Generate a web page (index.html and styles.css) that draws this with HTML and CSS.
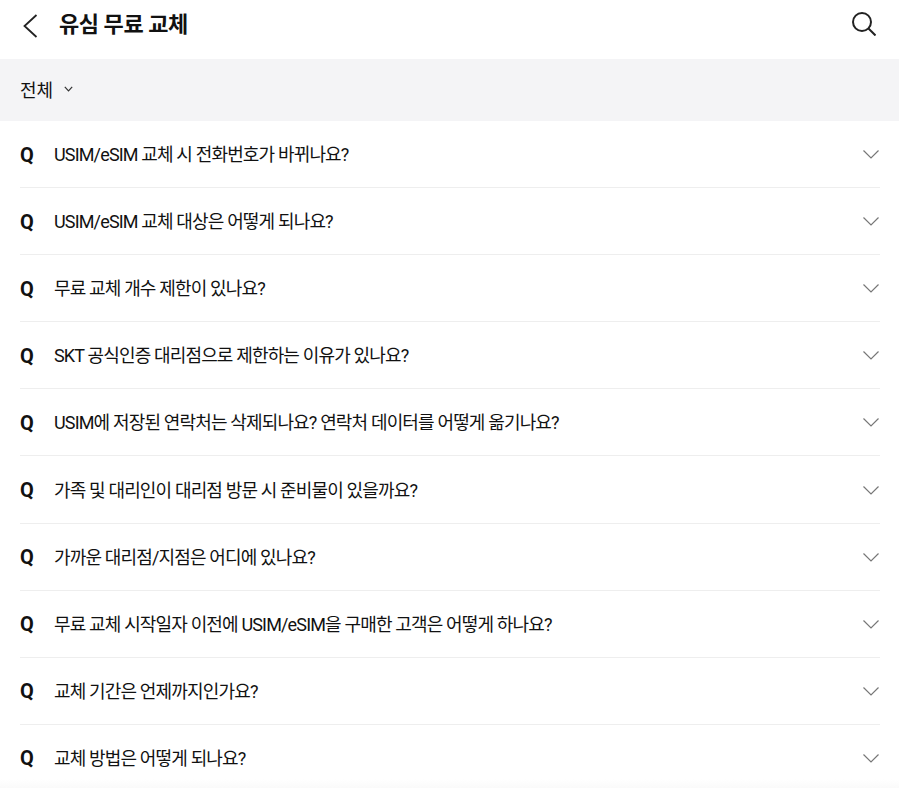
FILE: index.html
```html
<!DOCTYPE html>
<html lang="ko">
<head>
    <meta charset="UTF-8">
    <title>유심 무료 교체</title>
    <link rel="stylesheet" href="styles.css">
</head>
<body>
    <header class="top-bar">
        <div class="title-group">
            <button class="icon-button back-button" aria-label="back">
                <svg width="16" height="24" viewBox="0 0 16 24"><path d="M14.500 1 2.500 12 14.500 23" fill="none" stroke="#222" stroke-width="1.800"/></svg>
            </button>
            <h1>유심 무료 교체</h1>
        </div>
        <button class="icon-button search-button" aria-label="search">
            <svg width="24" height="24" viewBox="0 0 24 24"><circle cx="10" cy="10" r="9" fill="none" stroke="#222" stroke-width="2"/><path d="M16.500 16.500 23.500 23.500" fill="none" stroke="#222" stroke-width="2"/></svg>
        </button>
    </header>

    <div class="filter-bar">
        <span>전체</span>
        <svg width="9" height="6" viewBox="0 0 9 6"><path d="M.8.8 4.500 4.800 8.200.8" fill="none" stroke="#333" stroke-width="1.200"/></svg>
    </div>

    <ul class="faq-list">
        <li class="faq-item"><b>Q</b><span class="question">USIM/eSIM 교체 시 전화번호가 바뀌나요?</span><svg class="chevron" width="16" height="9" viewBox="0 0 16 9"><path d="M.5.500 8 8 15.500.5"/></svg></li>
        <li class="faq-item"><b>Q</b><span class="question">USIM/eSIM 교체 대상은 어떻게 되나요?</span><svg class="chevron" width="16" height="9" viewBox="0 0 16 9"><path d="M.5.500 8 8 15.500.5"/></svg></li>
        <li class="faq-item"><b>Q</b><span class="question">무료 교체 개수 제한이 있나요?</span><svg class="chevron" width="16" height="9" viewBox="0 0 16 9"><path d="M.5.500 8 8 15.500.5"/></svg></li>
        <li class="faq-item"><b>Q</b><span class="question">SKT 공식인증 대리점으로 제한하는 이유가 있나요?</span><svg class="chevron" width="16" height="9" viewBox="0 0 16 9"><path d="M.5.500 8 8 15.500.5"/></svg></li>
        <li class="faq-item"><b>Q</b><span class="question">USIM에 저장된 연락처는 삭제되나요? 연락처 데이터를 어떻게 옮기나요?</span><svg class="chevron" width="16" height="9" viewBox="0 0 16 9"><path d="M.5.500 8 8 15.500.5"/></svg></li>
        <li class="faq-item"><b>Q</b><span class="question">가족 및 대리인이 대리점 방문 시 준비물이 있을까요?</span><svg class="chevron" width="16" height="9" viewBox="0 0 16 9"><path d="M.5.500 8 8 15.500.5"/></svg></li>
        <li class="faq-item"><b>Q</b><span class="question">가까운 대리점/지점은 어디에 있나요?</span><svg class="chevron" width="16" height="9" viewBox="0 0 16 9"><path d="M.5.500 8 8 15.500.5"/></svg></li>
        <li class="faq-item"><b>Q</b><span class="question">무료 교체 시작일자 이전에 USIM/eSIM을 구매한 고객은 어떻게 하나요?</span><svg class="chevron" width="16" height="9" viewBox="0 0 16 9"><path d="M.5.500 8 8 15.500.5"/></svg></li>
        <li class="faq-item"><b>Q</b><span class="question">교체 기간은 언제까지인가요?</span><svg class="chevron" width="16" height="9" viewBox="0 0 16 9"><path d="M.5.500 8 8 15.500.5"/></svg></li>
        <li class="faq-item"><b>Q</b><span class="question">교체 방법은 어떻게 되나요?</span><svg class="chevron" width="16" height="9" viewBox="0 0 16 9"><path d="M.5.500 8 8 15.500.5"/></svg></li>
    </ul>

    <div class="bottom-fade"></div>
</body>
</html>
```

FILE: styles.css
```css
html, body {
    height: 100%;
}

body {
    position: relative;
    margin: 0;
    overflow: hidden;
    background-color: #fff;
    color: #111;
    font-family: Roboto, "Noto Sans CJK KR", sans-serif;
}

.top-bar {
    display: flex;
    justify-content: space-between;
    align-items: center;
    height: 59px;
    padding: 0 23px 9px 22px;
    box-sizing: border-box;
}

.title-group {
    display: flex;
    align-items: center;
    gap: 21px;
}

.top-bar h1 {
    margin: 0;
    font-size: 22px;
    line-height: 30px;
    font-weight: 700;
    letter-spacing: -0.45px;
}

.icon-button {
    display: flex;
    padding: 0;
    border: none;
    background: none;
}

.back-button {
    margin-top: 2px;
}

.search-button {
    margin-bottom: 2px;
}

.filter-bar {
    display: flex;
    align-items: center;
    gap: 11px;
    height: 62px;
    padding: 0 20px 2px 20px;
    box-sizing: border-box;
    background-color: #f4f4f6;
    font-size: 18px;
}

.faq-list {
    margin: 0;
    padding: 0 19px 0 20px;
    list-style: none;
}

.faq-item {
    display: flex;
    align-items: center;
    height: 67.1px;
    padding-bottom: 2px;
    border-bottom: 1px solid #eee;
    box-sizing: border-box;
}

.faq-item b {
    width: 34px;
    padding-top: 3px;
    font-size: 20px;
}

.question {
    flex: 1;
    font-size: 18px;
    letter-spacing: -0.84px;
}

.chevron {
    margin: 3px 1px 0 0;
}

.chevron path {
    fill: none;
    stroke: #777;
    stroke-width: 1.2;
}

/* faint fade over the last row */
.bottom-fade {
    position: absolute;
    left: 0;
    right: 0;
    bottom: 0;
    height: 9px;
    background: linear-gradient(rgba(245, 245, 245, 0), rgba(245, 245, 245, 0.5));
}
```
